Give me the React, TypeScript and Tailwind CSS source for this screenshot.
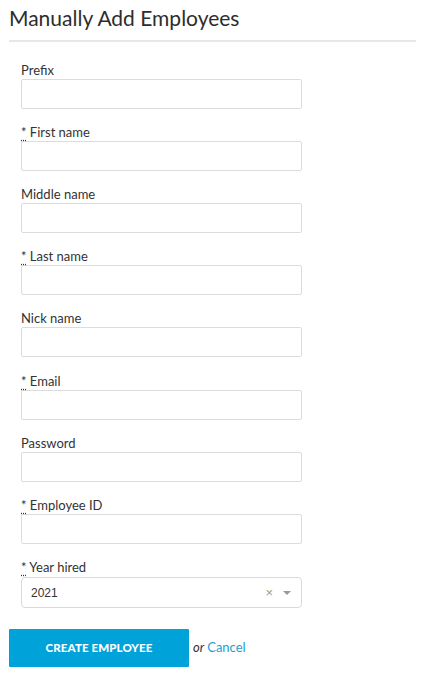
import React from "react";

const fields: { label: string; required: boolean }[] = [
  { label: "Prefix", required: false },
  { label: "First name", required: true },
  { label: "Middle name", required: false },
  { label: "Last name", required: true },
  { label: "Nick name", required: false },
  { label: "Email", required: true },
  { label: "Password", required: false },
  { label: "Employee ID", required: true },
];

function Label({ text, required }: { text: string; required: boolean }) {
  return (
    <label className="block text-[13px] leading-[18px] text-[#333333] font-['Lato',sans-serif]">
      {required && (
        <>
          <abbr title="required" className="no-underline [text-decoration:underline_dotted] [text-underline-offset:3px]">
            *
          </abbr>{" "}
        </>
      )}
      {text}
    </label>
  );
}

export default function App() {
  return (
    <div className="w-[422px] min-h-[674px] bg-white font-['Lato',sans-serif]">
      <div className="pl-[9px] pr-[6px]">
        <h1 className="pt-[3px] text-[21px] leading-[30px] text-[#2d2d2d] font-normal">
          Manually Add Employees
        </h1>
        <div className="mt-[7px] h-[2px] bg-[#e7e7e7]" />
      </div>
      <form className="pl-[21px] pt-[19px] w-[302px]" onSubmit={(e) => e.preventDefault()}>
        {fields.map((f, i) => (
          <div key={f.label} className={i === 5 ? "mb-[14px] pt-[1px]" : "mb-[14px]"}>
            <Label text={f.label} required={f.required} />
            <input
              type={f.label === "Password" ? "password" : "text"}
              className="block w-[281px] h-[30px] border border-[#dcdcdc] rounded-[2px] bg-white outline-none"
            />
          </div>
        ))}
        <div className="mb-[21px]">
          <Label text="Year hired" required={true} />
          <div className="mt-[1px] flex items-center w-[281px] h-[31px] border border-[#d9d9d9] rounded-[4px] bg-white pl-[9px] pr-[10px]">
            <span className="flex-1 text-[12px] text-[#333333] font-['Liberation_Sans',sans-serif]">2021</span>
            <span className="text-[13px] text-[#999999] font-['Liberation_Sans',sans-serif] leading-none mr-[10px]">×</span>
            <span className="w-0 h-0 border-l-[4px] border-r-[4px] border-t-[4px] border-l-transparent border-r-transparent border-t-[#999999]" />
          </div>
        </div>
      </form>
      <div className="flex items-center pl-[9px]">
        <button className="w-[180px] h-[38px] bg-[#00a3d9] rounded-[1px] text-white text-[11.5px] font-black tracking-[0.1px] font-['Lato',sans-serif]">
          CREATE EMPLOYEE
        </button>
        <span className="ml-[4px] text-[13px] italic text-[#333333]">or</span>
        <a href="#" className="ml-[3px] text-[13px] text-[#1a9fd6]">
          Cancel
        </a>
      </div>
    </div>
  );
}
